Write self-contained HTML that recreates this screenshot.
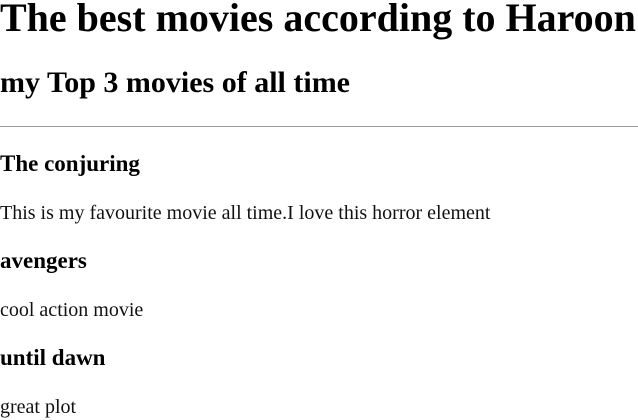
<!DOCTYPE html>
<html><head><meta charset="utf-8"><style>
html,body{margin:0;padding:0;background:#fff;width:638px;height:420px;overflow:hidden;position:relative;font-family:"Liberation Serif",serif;color:#000}
div{position:absolute;left:0;line-height:1;white-space:nowrap}
.h1{font-size:40px;font-weight:bold}
.h2{font-size:30px;font-weight:bold}
.h3{font-size:23px;font-weight:bold}
.p{font-size:20px;color:#111}
.hr{left:0;width:638px;height:0;border-top:1px solid #999;}
</style></head><body>
<div class="h1" style="top:-2px">The best movies according to Haroon</div>
<div class="h2" style="top:68px">my Top 3 movies of all time</div>
<div class="hr" style="top:126px"></div>
<div class="h3" style="top:152px">The conjuring</div>
<div class="p" style="top:203px">This is my favourite movie all time.I love this horror element</div>
<div class="h3" style="top:249px">avengers</div>
<div class="p" style="top:300px">cool action movie</div>
<div class="h3" style="top:346px">until dawn</div>
<div class="p" style="top:397px">great plot</div>
</body></html>
